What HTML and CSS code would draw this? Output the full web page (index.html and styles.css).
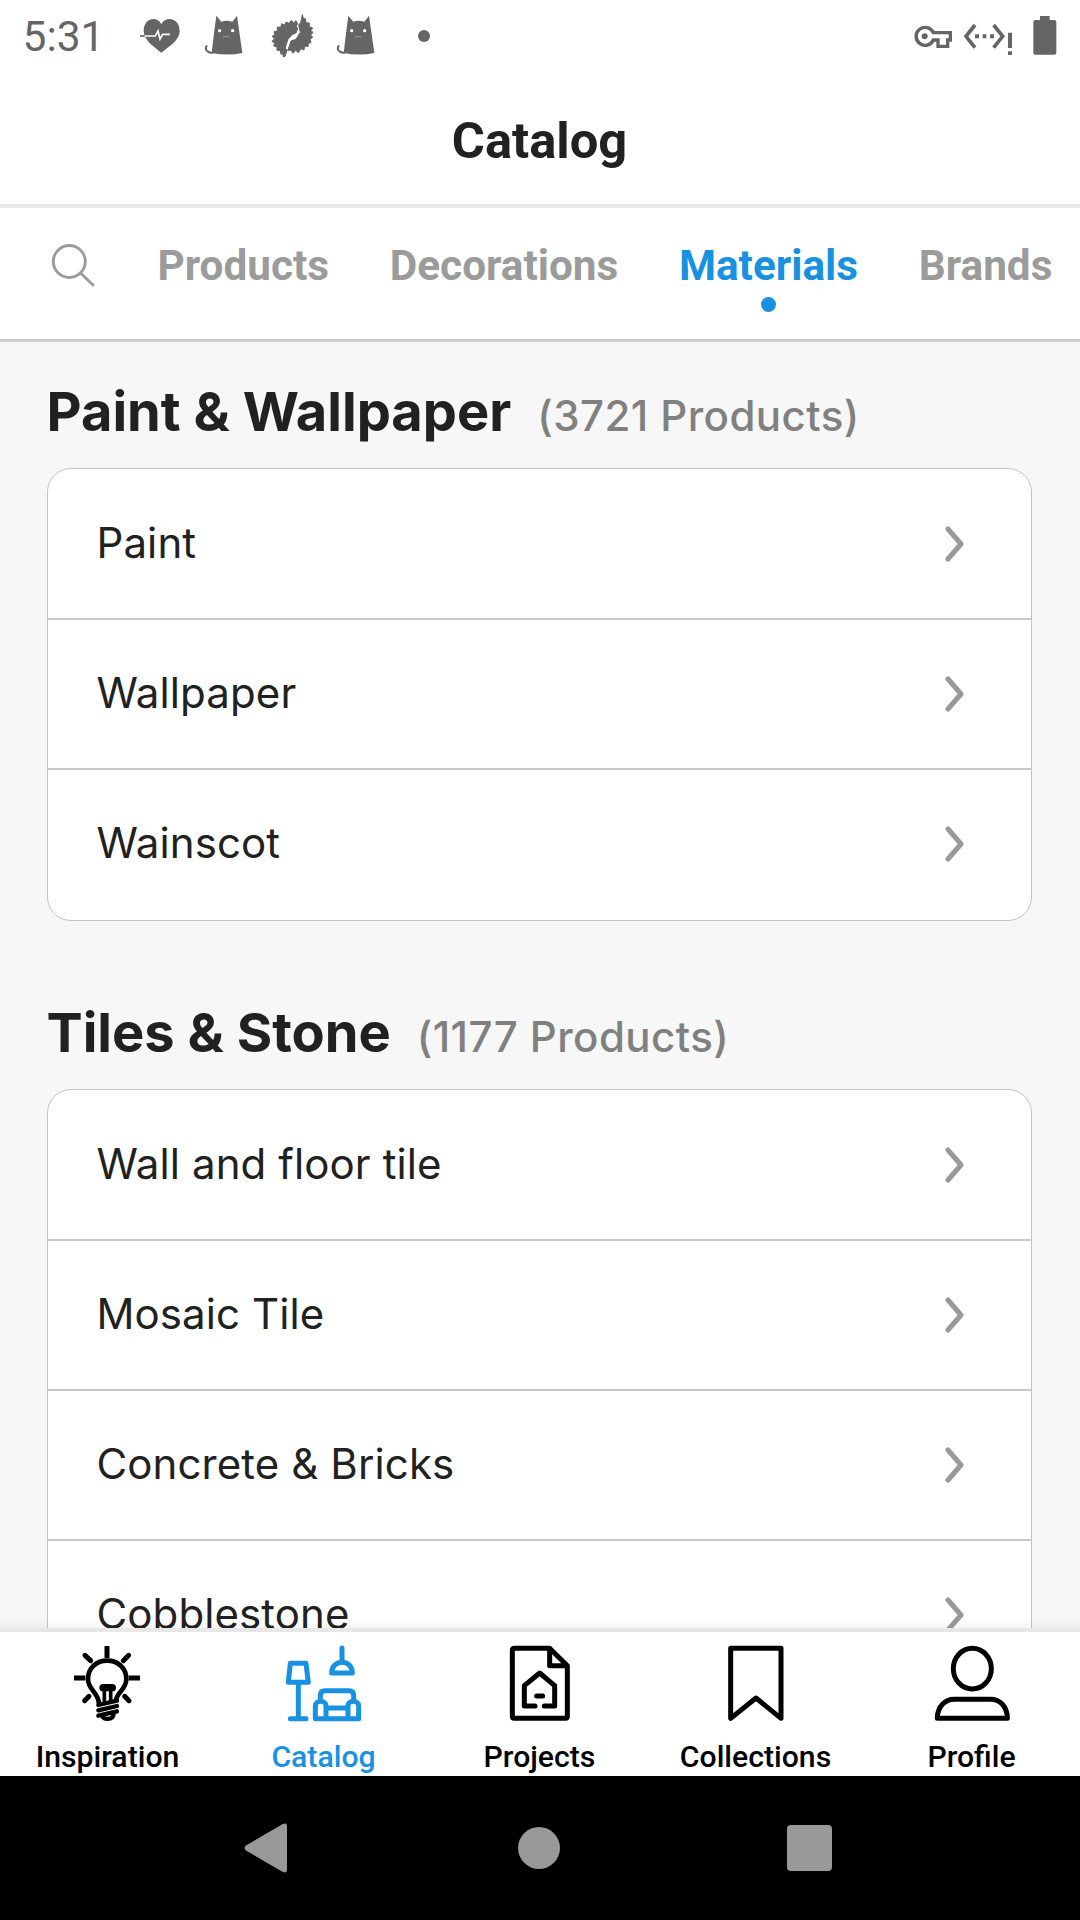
FILE: index.html
```html
<!DOCTYPE html>
<html lang="en">
<head>
<meta charset="utf-8">
<title>Catalog</title>
<link rel="stylesheet" href="styles.css">
</head>
<body>
<div class="screen">
  <div class="status">
    <div class="status-left">
      <span class="clock">5:31</span>
      <svg class="heart" width="42" height="44" viewBox="420 42 126 132"><path fill="#656565" d="M484 158C462 140 432 122 431 93C431 54 470 46 484 72C498 46 539 54 539 93C539 122 506 140 484 158Z"/><path d="M420 108H466L474 93L480 117L488 103H510" fill="none" stroke="#fff" stroke-width="5"/><path d="M420 108H434" stroke="#656565" stroke-width="5"/></svg>
      <svg class="cat" width="40" height="44" viewBox="612 42 120 132"><path fill="#656565" d="M649 47L664 65Q680 60 697 65L711 47L727 159Q682 168 635 159L642 100Z"/><path d="M639 158C622 160 612 147 621 136" fill="none" stroke="#656565" stroke-width="6"/><circle cx="659" cy="92" r="5" fill="#fff"/><circle cx="698" cy="92" r="5" fill="#fff"/><path d="M669 111Q679 107 689 111" stroke="#999" stroke-width="3" fill="none"/></svg>
      <svg class="gear" width="44" height="46" viewBox="810 40 132 138"><g fill="#656565" stroke="#656565" stroke-width="3" stroke-linejoin="round"><path d="M893 72L888 63L880 70L874 62L867 71L858 67L855 76L845 72L842 83L832 82L832 94L822 96L825 105L816 110L824 117L816 125L825 130L821 139L831 142L831 152L841 153L843 164L849 162L850 172L855 170L861 151L855 146L864 119L876 105L889 99L893 86L888 79Z"/><path d="M907 45L911 59L916 56L918 69L928 70L928 81L938 85L932 93L939 98L932 106L938 113L930 119L933 129L924 131L925 140L914 140L912 151L903 147L895 159L887 152L879 161L873 151L863 153L873 124L888 119L901 98L896 76L902 69Z"/></g></svg>
      <svg class="cat cat-second" width="40" height="44" viewBox="612 42 120 132"><path fill="#656565" d="M649 47L664 65Q680 60 697 65L711 47L727 159Q682 168 635 159L642 100Z"/><path d="M639 158C622 160 612 147 621 136" fill="none" stroke="#656565" stroke-width="6"/><circle cx="659" cy="92" r="5" fill="#fff"/><circle cx="698" cy="92" r="5" fill="#fff"/><path d="M669 111Q679 107 689 111" stroke="#999" stroke-width="3" fill="none"/></svg>
      <span class="more"></span>
    </div>
    <div class="status-right">
      <svg width="40" height="44" viewBox="99 42 120 132"><path d="M160 98A27 27 0 1 0 160 120H174V139H203V120H211V98Z" fill="none" stroke="#656565" stroke-width="10"/><circle cx="134" cy="109" r="9" fill="#656565"/></svg>
      <svg width="50" height="44" viewBox="249 42 150 132"><path d="M285 75L258 109L285 143M341 75L368 109L341 143" fill="none" stroke="#656565" stroke-width="11"/><path d="M285 103h12v12h-12zM308 103h11v12h-11zM330 103h12v12h-12zM384 98h12v46h-12zM384 154h12v11h-12z" fill="#656565"/></svg>
      <svg width="24" height="44" viewBox="458 42 72 132"><path d="M479 48H508V60H522Q528 60 528 66V158Q528 164 522 164H465Q459 164 459 158V66Q459 60 465 60H479Z" fill="#656565"/></svg>
    </div>
  </div>
  <header class="header"><h1>Catalog</h1></header>
  <nav class="tabs">
    <svg class="search" width="44" height="46" viewBox="0 0 44 46" fill="none" stroke="#9b9b9b" stroke-width="2.9" stroke-linecap="round"><circle cx="18.3" cy="18.5" r="16"/><path d="M29.5 30L42 42"/></svg>
    <span class="tab">Products</span>
    <span class="tab">Decorations</span>
    <span class="tab active">Materials</span>
    <span class="tab">Brands</span>
  </nav>
  <main class="content">
    <section>
      <div class="heading"><h2>Paint &amp; Wallpaper</h2><span class="count">(3721 Products)</span></div>
      <ul class="card">
        <li><span>Paint</span><svg class="chev" viewBox="0 0 20 36"><path d="M3 3L16 18L3 33"/></svg></li>
        <li><span>Wallpaper</span><svg class="chev" viewBox="0 0 20 36"><path d="M3 3L16 18L3 33"/></svg></li>
        <li><span>Wainscot</span><svg class="chev" viewBox="0 0 20 36"><path d="M3 3L16 18L3 33"/></svg></li>
      </ul>
    </section>
    <section>
      <div class="heading"><h2>Tiles &amp; Stone</h2><span class="count">(1177 Products)</span></div>
      <ul class="card">
        <li><span>Wall and floor tile</span><svg class="chev" viewBox="0 0 20 36"><path d="M3 3L16 18L3 33"/></svg></li>
        <li><span>Mosaic Tile</span><svg class="chev" viewBox="0 0 20 36"><path d="M3 3L16 18L3 33"/></svg></li>
        <li><span>Concrete &amp; Bricks</span><svg class="chev" viewBox="0 0 20 36"><path d="M3 3L16 18L3 33"/></svg></li>
        <li><span>Cobblestone</span><svg class="chev" viewBox="0 0 20 36"><path d="M3 3L16 18L3 33"/></svg></li>
      </ul>
    </section>
  </main>
  <footer class="bottom">
    <div class="item">
      <svg viewBox="207 132 234 234"><g stroke-width="15"><path d="M321 138V174M222 234H256M386 234H420"/><path stroke-linecap="round" d="M255 166L272 182M386 166L370 182M254 302L267 289M387 302L374 289"/></g><path stroke-width="14" d="M297 312C297 278 264 270 264 238C264 202 291 182 321 182C352 182 379 202 379 238C379 270 347 278 347 306"/><path stroke-width="11" d="M313 306V268M332 302V268"/><path stroke-width="22" stroke-linecap="round" d="M309 263H337"/><path stroke-width="13" stroke-linecap="round" d="M295 315L351 302M295 331L351 318M295 347L351 334"/><path stroke-width="13" d="M306 346C308 361 339 361 341 342"/></svg>
      <span>Inspiration</span>
    </div>
    <div class="item on">
      <svg viewBox="855 132 234 234"><g stroke-width="15" stroke-linecap="round" stroke-linejoin="round"><path d="M871 190H918L925 247H865ZM895 249V351M871 356H918M1026 144V184M995 219C995 176 1057 176 1057 219Z"/><path d="M961 297V286Q961 272 975 272H1047Q1061 272 1061 286V297M978 324H1044M946 356V318C946 299 978 299 978 318V356M1044 356V318C1044 299 1076 299 1076 318V356M946 356H1076"/></g></svg>
      <span>Catalog</span>
    </div>
    <div class="item">
      <svg viewBox="303 132 234 234"><g stroke-width="15" stroke-linejoin="round" stroke-linecap="round"><path d="M449 145H343Q337 145 337 151V349Q337 355 343 355H496Q502 355 502 349V197ZM449 145V197H502M405 318H373V257L419 219L464 257V318H433M410 288H428"/></g></svg>
      <span>Projects</span>
    </div>
    <div class="item">
      <svg viewBox="51 132 234 234"><path stroke-width="15" stroke-linejoin="round" d="M92 145H243V355L168 294L92 355Z"/></svg>
      <span>Collections</span>
    </div>
    <div class="item">
      <svg viewBox="699 132 234 234"><g stroke-width="15" stroke-linejoin="round"><ellipse cx="817" cy="206" rx="57" ry="61"/><path d="M712 355C712 319 736 298 763 298H871C899 298 922 319 922 355Z"/></g></svg>
      <span>Profile</span>
    </div>
  </footer>
  <div class="sysnav">
    <svg viewBox="0 0 1080 144" width="1080" height="144" fill="#999"><path d="M246 69.500L282 48.500Q287 46 287 50V94Q287 98 282 95.500L246 74.500Q243 72 246 69.500Z"/><circle cx="539" cy="72" r="21"/><rect x="787" y="49" width="45" height="46" rx="4"/></svg>
  </div>
</div>
</body>
</html>
```
FILE: styles.css
```css
* { box-sizing: border-box; }
body { margin: 0; font-family: Roboto, sans-serif; background: #fff; }
h1, h2, ul { margin: 0; padding: 0; }
svg { display: block; flex: none; }
.screen { width: 1080px; height: 1920px; display: flex; flex-direction: column; overflow: hidden; background: #fff; }

.status { height: 72px; flex: none; display: flex; justify-content: space-between; color: #656565; }
.status-left { display: flex; align-items: center; padding-left: 22.5px; }
.clock { width: 117.5px; font-size: 42.5px; line-height: 72px; font-weight: 450; padding-top: 2px; }
.cat { margin-left: 22px; }
.gear { margin: 0 2px 0 26px; }
.cat-second { margin-left: 20px; }
.more { width: 12px; height: 12px; border-radius: 50%; background: #656565; margin-left: 42px; }
.status-right { display: flex; align-items: center; gap: 10px; padding-right: 23px; }
.status-right svg:last-child { margin-left: 10px; }

.header { height: 136px; flex: none; display: flex; justify-content: center; border-bottom: 4px solid #e9e9e9; }
.header h1 { font-size: 50.7px; line-height: 60px; font-weight: 700; color: #212121; padding-top: 39px; margin-right: 1px; }

.tabs { height: 134px; flex: none; display: flex; align-items: flex-start; padding: 35px 0 0 51px; border-bottom: 3px solid #cfcfcf; color: #9b9b9b; }
.search { margin-right: 62.5px; }
.tab { position: relative; font-size: 42.3px; line-height: 50px; font-weight: 700; margin: -2px 60.7px 0 0; white-space: nowrap; }
.active { color: #1791e0; }
.active::after { content: ""; position: absolute; left: 50%; top: 56px; width: 15px; height: 15px; margin-left: -7px; border-radius: 50%; background: #1791e0; }

.content { flex: 1; min-height: 0; overflow: hidden; background: #f7f7f7; padding: 0 47px; font-family: Inter, sans-serif; }
.heading { height: 126px; display: flex; align-items: baseline; padding-top: 36px; white-space: nowrap; }
.heading h2 { font-size: 54.2px; line-height: 66px; font-weight: 700; color: #212121; margin-left: -.5px; }
.count { margin-left: 26px; font-size: 42px; font-weight: 450; color: #808080; letter-spacing: .45px; }
.card { list-style: none; background: #fff; border: 1px solid #c4c4c4; border-radius: 24px; width: 985px; height: 453px; margin-bottom: 42px; }
.card li { height: 150px; display: flex; align-items: center; justify-content: space-between; padding: 0 66px 0 48.5px; font-size: 42px; font-weight: 370; color: #212121; letter-spacing: .1px; }
.card li:first-child { height: 149px; }
.card li span { padding-bottom: 3px; }
.card li + li { border-top: 2px solid #c8c8c8; }
section:last-child .card { height: 610px; }
.chev { width: 20px; height: 36px; fill: none; stroke: #999; stroke-width: 5; stroke-linecap: round; stroke-linejoin: round; }

.bottom { height: 148px; flex: none; display: flex; background: #fff; border-top: 4px solid #e7e7e7; position: relative; }
.bottom::before { content: ""; position: absolute; left: 0; right: 0; top: -14px; height: 10px; background: linear-gradient(transparent, rgba(0,0,0,.04)); }
.item { flex: 1; display: flex; flex-direction: column; align-items: center; color: #000; padding-top: 12px; }
.item svg { width: 78px; height: 78px; fill: none; stroke: currentColor; }
.item span { font-size: 30.2px; line-height: 34px; font-weight: 500; margin: 18px 1px 0 0; white-space: nowrap; }
.on { color: #1791e0; }
.sysnav { height: 144px; flex: none; background: #000; }
```
